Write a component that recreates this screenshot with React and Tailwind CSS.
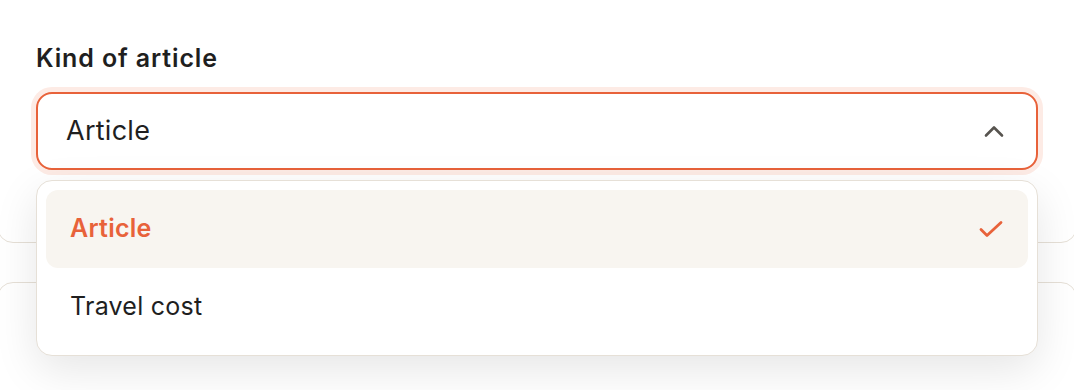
import React, { useState } from "react";

const options = ["Article", "Travel cost"];

const ChevronUp = () => (
  <svg width="20" height="13" viewBox="0 0 20 13" fill="none">
    <path d="M2 10.5L10 2.5L18 10.5" stroke="#57544f" strokeWidth="2.6" strokeLinecap="round" strokeLinejoin="round" />
  </svg>
);

const Check = () => (
  <svg width="24" height="18" viewBox="0 0 24 18" fill="none">
    <path d="M2 9.5L8 15.5L22 2.5" stroke="#e8623a" strokeWidth="2.8" strokeLinecap="round" strokeLinejoin="round" />
  </svg>
);

const App = () => {
  const [selected, setSelected] = useState("Article");
  const [open, setOpen] = useState(true);

  return (
    <div
      className="h-[390px] bg-white px-[37px] overflow-hidden text-[#1f1f1f]"
      style={{ fontFamily: "Inter, 'Noto Sans', sans-serif" }}
    >
      {/* first section, its top runs above the view */}
      <div className="-mx-[40px] -mt-[20px] px-[38px] pt-[61px] h-[263px] border-[1.5px] border-[#e6e0d7] rounded-2xl">
        <label className="block text-[25px] leading-[32px] font-semibold tracking-[0.035em] mb-[18px]">Kind of article</label>

        <div className="relative z-10">
          <button
            onClick={() => setOpen(!open)}
            className="w-full h-[78px] flex items-center justify-between bg-white border-2 border-[#e8623a] rounded-2xl pl-[28px] pr-[32px] ring-[5px] ring-[#fdebe5] text-[27px] tracking-[0.01em]"
          >
            <span>{selected}</span>
            <ChevronUp />
          </button>

          {open && (
            <div className="absolute left-0 right-0 top-[calc(100%+10px)] bg-white border-[1.5px] border-[#e6e0d7] rounded-2xl p-[9px] shadow-[0_14px_44px_rgba(0,0,0,0.10)]">
              {options.map((opt) => (
                <div
                  key={opt}
                  onClick={() => setSelected(opt)}
                  className={
                    opt === selected
                      ? "h-[78px] flex items-center justify-between rounded-xl pl-[24px] pr-[25px] bg-[#f8f5f0] text-[#e8623a] font-semibold text-[25px] tracking-[0.01em]"
                      : "h-[78px] flex items-center justify-between rounded-xl pl-[24px] pr-[25px] text-[25px] tracking-[0.01em]"
                  }
                >
                  <span>{opt}</span>
                  {opt === selected && <Check />}
                </div>
              ))}
            </div>
          )}
        </div>
      </div>

      {/* next section, mostly under the menu */}
      <div className="-mx-[40px] mt-[39px] h-[120px] border-[1.5px] border-[#e6e0d7] rounded-2xl px-[39px] pt-[34px]">
        <div className="text-[24px] leading-[32px] font-semibold">Description</div>
      </div>
    </div>
  );
};

export default App;
